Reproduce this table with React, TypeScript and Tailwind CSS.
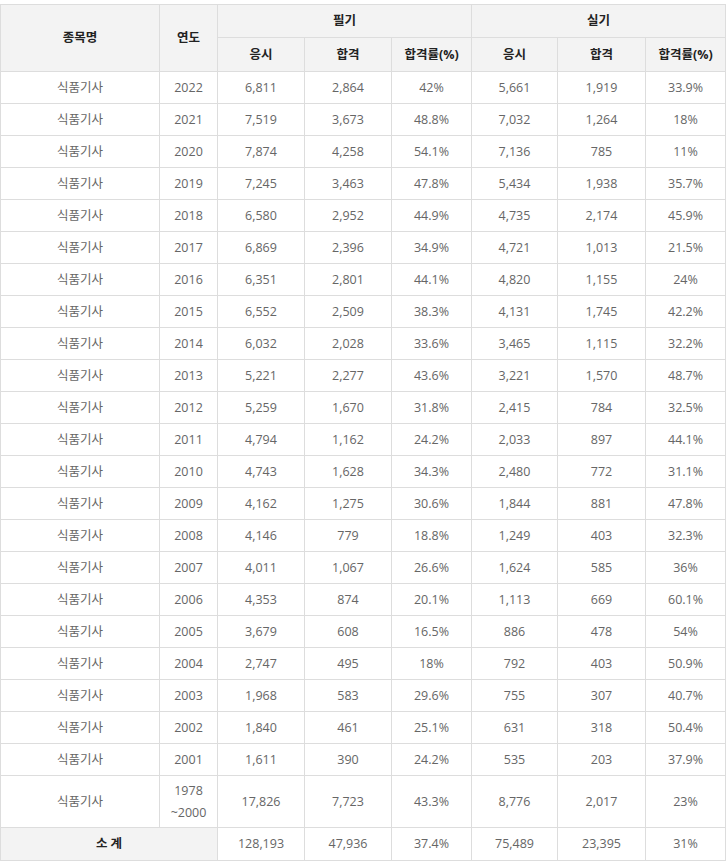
const rows: [string, string, string, string, string, string, string][] = [
  ["2022", "6,811", "2,864", "42%", "5,661", "1,919", "33.9%"],
  ["2021", "7,519", "3,673", "48.8%", "7,032", "1,264", "18%"],
  ["2020", "7,874", "4,258", "54.1%", "7,136", "785", "11%"],
  ["2019", "7,245", "3,463", "47.8%", "5,434", "1,938", "35.7%"],
  ["2018", "6,580", "2,952", "44.9%", "4,735", "2,174", "45.9%"],
  ["2017", "6,869", "2,396", "34.9%", "4,721", "1,013", "21.5%"],
  ["2016", "6,351", "2,801", "44.1%", "4,820", "1,155", "24%"],
  ["2015", "6,552", "2,509", "38.3%", "4,131", "1,745", "42.2%"],
  ["2014", "6,032", "2,028", "33.6%", "3,465", "1,115", "32.2%"],
  ["2013", "5,221", "2,277", "43.6%", "3,221", "1,570", "48.7%"],
  ["2012", "5,259", "1,670", "31.8%", "2,415", "784", "32.5%"],
  ["2011", "4,794", "1,162", "24.2%", "2,033", "897", "44.1%"],
  ["2010", "4,743", "1,628", "34.3%", "2,480", "772", "31.1%"],
  ["2009", "4,162", "1,275", "30.6%", "1,844", "881", "47.8%"],
  ["2008", "4,146", "779", "18.8%", "1,249", "403", "32.3%"],
  ["2007", "4,011", "1,067", "26.6%", "1,624", "585", "36%"],
  ["2006", "4,353", "874", "20.1%", "1,113", "669", "60.1%"],
  ["2005", "3,679", "608", "16.5%", "886", "478", "54%"],
  ["2004", "2,747", "495", "18%", "792", "403", "50.9%"],
  ["2003", "1,968", "583", "29.6%", "755", "307", "40.7%"],
  ["2002", "1,840", "461", "25.1%", "631", "318", "50.4%"],
  ["2001", "1,611", "390", "24.2%", "535", "203", "37.9%"],
];

const th = "border border-[#dddddd] bg-[#f3f3f3] text-[#222] font-bold text-center p-0";
const td = "border border-[#dddddd] text-[#666] text-center p-0";

export default function App() {
  return (
    <div
      className="bg-white pt-[4px] w-[727px]"
      style={{ fontFamily: '"Open Sans", "Noto Sans CJK KR", sans-serif' }}
    >
      <table className="table-fixed border-collapse w-[725px] text-[12.5px] leading-[18px]">
        <colgroup>
          <col className="w-[159px]" />
          <col className="w-[58px]" />
          <col className="w-[87px]" />
          <col className="w-[87px]" />
          <col className="w-[80px]" />
          <col className="w-[86px]" />
          <col className="w-[88px]" />
          <col className="w-[80px]" />
        </colgroup>
        <thead>
          <tr className="h-[33px]">
            <th rowSpan={2} className={th}>종목명</th>
            <th rowSpan={2} className={th}>연도</th>
            <th colSpan={3} className={th}>필기</th>
            <th colSpan={3} className={th}>실기</th>
          </tr>
          <tr className="h-[34px]">
            <th className={th}>응시</th>
            <th className={th}>합격</th>
            <th className={th}>합격률(%)</th>
            <th className={th}>응시</th>
            <th className={th}>합격</th>
            <th className={th}>합격률(%)</th>
          </tr>
        </thead>
        <tbody>
          {rows.map((r) => (
            <tr key={r[0]} className="h-[32px]">
              <td className={td}>식품기사</td>
              {r.map((v, i) => (
                <td key={i} className={td}>{v}</td>
              ))}
            </tr>
          ))}
          <tr className="h-[52px]">
            <td className={td}>식품기사</td>
            <td className={td + " leading-[22px]"}>
              1978
              <br />
              ~2000
            </td>
            <td className={td}>17,826</td>
            <td className={td}>7,723</td>
            <td className={td}>43.3%</td>
            <td className={td}>8,776</td>
            <td className={td}>2,017</td>
            <td className={td}>23%</td>
          </tr>
          <tr className="h-[33px]">
            <td colSpan={2} className={th}>소 계</td>
            <td className={td}>128,193</td>
            <td className={td}>47,936</td>
            <td className={td}>37.4%</td>
            <td className={td}>75,489</td>
            <td className={td}>23,395</td>
            <td className={td}>31%</td>
          </tr>
        </tbody>
      </table>
    </div>
  );
}
